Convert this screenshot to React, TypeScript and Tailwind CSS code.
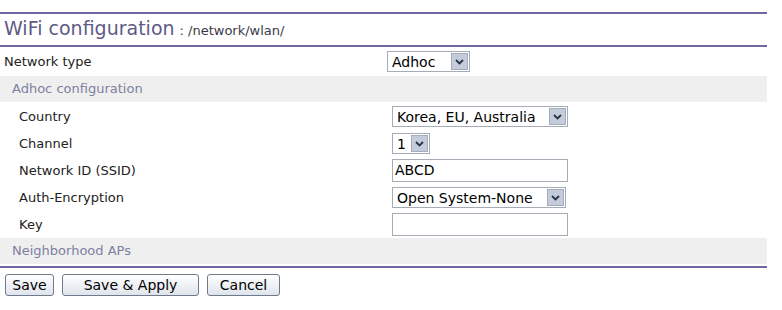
function Chevron() {
  return (
    <span className="flex items-center justify-center w-[17px] h-[17px] bg-[#c5ccd9] border border-[#a3acbd] ml-[2px]">
      <svg width="9" height="6" viewBox="0 0 9 6">
        <path d="M1 1 L4.5 4.5 L8 1" fill="none" stroke="#26334d" strokeWidth="1.8" />
      </svg>
    </span>
  );
}

function Select({ value, width }: { value: string; width: string }) {
  return (
    <div className={`flex items-center h-[21px] bg-white border border-[#a5acb5] pl-[4px] pr-[1px] ${width}`}>
      <span className="flex-1 text-[14px] text-black whitespace-nowrap leading-none">{value}</span>
      <Chevron />
    </div>
  );
}

function Input({ value }: { value: string }) {
  return (
    <div className="flex items-center h-[23px] w-[176px] bg-white border border-[#a5acb5] px-[2px] text-[14px] text-black">
      {value}
    </div>
  );
}

function Row({ label, children }: { label: string; children: React.ReactNode }) {
  return (
    <div className="flex items-center h-[27px]">
      <div className="w-[392px] pl-[19px] text-[13px] text-[#222]">{label}</div>
      <div>{children}</div>
    </div>
  );
}

function Section({ title }: { title: string }) {
  return (
    <div className="flex items-center h-[26px] bg-[#efefef] pl-[12px] text-[13px] text-[#7d80a0]">{title}</div>
  );
}

function Btn({ label, width }: { label: string; width: string }) {
  return (
    <button className={`h-[22px] ${width} rounded-[3px] border border-[#6d7a8e] bg-gradient-to-b from-white to-[#dfe4ec] text-[14px] text-black leading-none`}>
      {label}
    </button>
  );
}

export default function App() {
  return (
    <div className="w-[782px] h-[310px] bg-white font-['DejaVu_Sans',sans-serif]">
      <div className="w-[767px] pt-[12px]">
        <div className="h-[2px] bg-[#6c679e]" />
        <div className="flex items-baseline h-[31px] pl-[4px] pt-[5px]">
          <span className="text-[19px] text-[#5e5b86] leading-none">WiFi configuration</span>
          <span className="text-[13px] text-[#3a3a4a] ml-[5px]">: /network/wlan/</span>
        </div>
        <div className="h-[2px] bg-[#6c679e]" />
        <div className="flex items-center h-[29px]">
          <div className="w-[387px] pl-[4px] text-[13px] text-[#222]">Network type</div>
          <Select value="Adhoc" width="w-[83px]" />
        </div>
        <Section title="Adhoc configuration" />
        <div className="pt-[1px]">
          <Row label="Country">
            <Select value="Korea, EU, Australia" width="w-[176px]" />
          </Row>
          <Row label="Channel">
            <Select value="1" width="w-[38px]" />
          </Row>
          <Row label="Network ID (SSID)">
            <Input value="ABCD" />
          </Row>
          <Row label="Auth-Encryption">
            <Select value="Open System-None" width="w-[174px]" />
          </Row>
          <Row label="Key">
            <Input value="" />
          </Row>
        </div>
        <Section title="Neighborhood APs" />
        <div className="h-[2px] mt-[2px] bg-[#6c679e]" />
        <div className="flex gap-[8px] pl-[5px] pt-[6px]">
          <Btn label="Save" width="w-[49px]" />
          <Btn label="Save & Apply" width="w-[137px]" />
          <Btn label="Cancel" width="w-[73px]" />
        </div>
      </div>
    </div>
  );
}
